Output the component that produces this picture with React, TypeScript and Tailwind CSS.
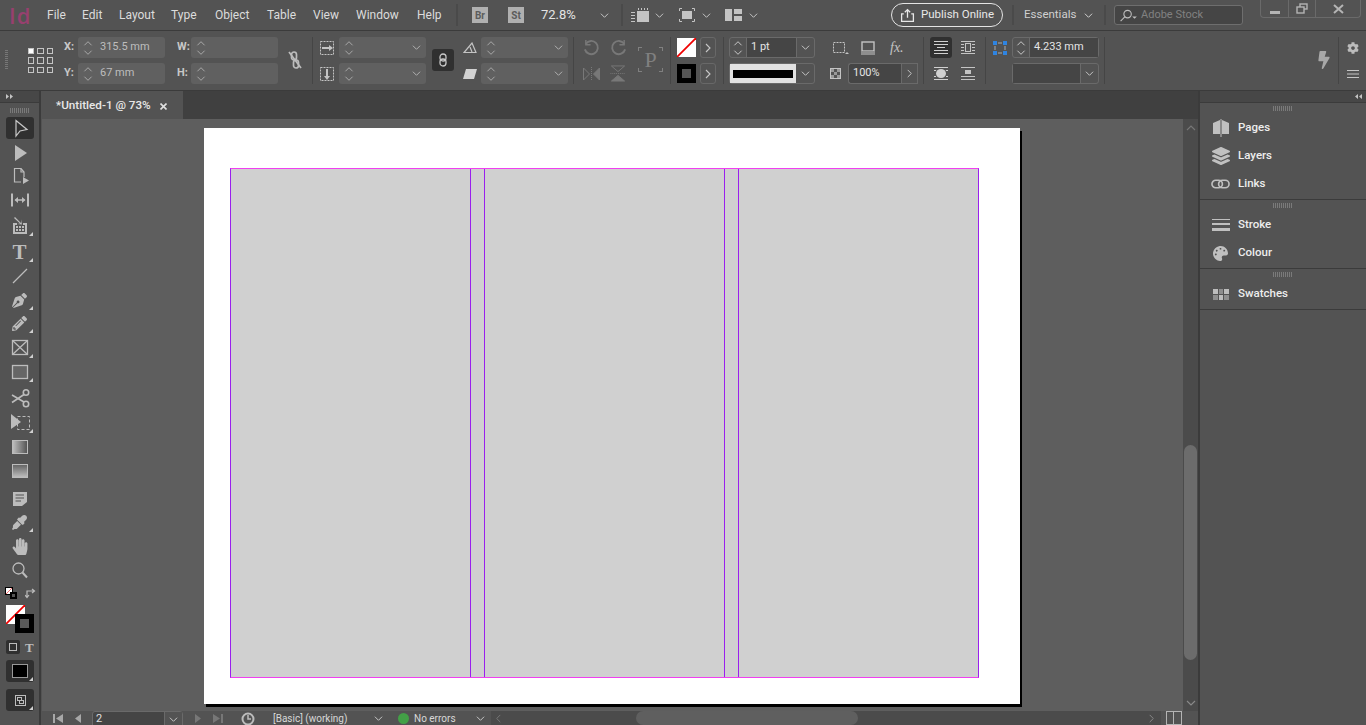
import type { FC, ReactNode } from "react";
import { FaBolt, FaCog, FaEyeDropper, FaHandPaper, FaLayerGroup, FaPalette, FaPencilAlt, FaPenNib } from "react-icons/fa";

const Chev: FC<{ dir?: "up" | "down" | "left" | "right"; className?: string }> = ({ dir = "down", className = "w-[9px] h-[9px] text-[#c4c4c4]" }) => {
  const pts = { up: "1,7 5,3 9,7", down: "1,3 5,7 9,3", left: "7,1 3,5 7,9", right: "3,1 7,5 3,9" }[dir];
  return (
    <svg viewBox="0 0 10 10" className={`shrink-0 ${className}`} fill="none" stroke="currentColor" strokeWidth="1.1">
      <polyline points={pts} />
    </svg>
  );
};

const Divider: FC<{ className: string }> = ({ className }) => <div className={`w-px shrink-0 bg-[#454545] ${className}`} />;

const Stepper: FC<{ value?: string; dropdown?: boolean }> = ({ value, dropdown }) => (
  <div className="flex h-[21px] w-[87px] items-center rounded-[3px] bg-[#606060]">
    <div className="ml-[4px] flex w-[12px] flex-col items-center text-[#a8a8a8]">
      <Chev dir="up" className="h-[9px] w-[10px]" />
      <Chev dir="down" className="h-[9px] w-[10px]" />
    </div>
    <span className="ml-[6px] text-[11px] text-[#bdbdbd]">{value}</span>
    {dropdown && <Chev className="ml-auto mr-[5px] h-[9px] w-[9px] text-[#b0b0b0]" />}
  </div>
);

const TwoRows: FC<{ className: string; children: ReactNode }> = ({ className, children }) => (
  <div className={`flex shrink-0 flex-col gap-[5px] ${className}`}>{children}</div>
);

const Row: FC<{ children?: ReactNode; className?: string }> = ({ children, className = "" }) => (
  <div className={`flex h-[21px] items-center ${className}`}>{children}</div>
);

const NoneSwatch: FC<{ className: string }> = ({ className }) => (
  <svg viewBox="0 0 19 19" className={className}>
    <rect width="19" height="19" fill="#fff" />
    <line x1="0" y1="19" x2="19" y2="0" stroke="#f00000" strokeWidth="1.8" />
  </svg>
);

const Corner: FC = () => (
  <span className="absolute bottom-[1px] right-[1px] h-0 w-0 border-b-[4px] border-l-[4px] border-b-[#cfcfcf] border-l-transparent" />
);

const MENU = [
  { label: "File", w: "w-[35px]" },
  { label: "Edit", w: "w-[37px]" },
  { label: "Layout", w: "w-[52px]" },
  { label: "Type", w: "w-[44px]" },
  { label: "Object", w: "w-[52px]" },
  { label: "Table", w: "w-[46px]" },
  { label: "View", w: "w-[43px]" },
  { label: "Window", w: "w-[61px]" },
  { label: "Help", w: "w-[39px]" },
];

const MenuBar: FC = () => (
  <div className="flex h-[30px] items-center text-[12px] text-[#dcdcdc]">
    <span className="w-[47px] shrink-0 pl-[9px] text-[22px] font-semibold leading-none tracking-[1px] text-[#97406f] [font-family:'Open_Sans',sans-serif]">Id</span>
    {MENU.map((m) => (
      <span key={m.label} className={`shrink-0 ${m.w}`}>{m.label}</span>
    ))}
    <div className="h-[22px] w-[2px] shrink-0 bg-[#4a4a4a]" />
    <span className="ml-[14px] flex h-[16px] w-[16px] shrink-0 items-center justify-center bg-[#b0b0b0] text-[10px] font-bold text-[#5c5c5c]">Br</span>
    <span className="ml-[20px] flex h-[16px] w-[16px] shrink-0 items-center justify-center bg-[#b0b0b0] text-[10px] font-bold text-[#5c5c5c]">St</span>
    <span className="ml-[17px] w-[59px] shrink-0 text-[13px] text-[#e4e4e4]">72.8%</span>
    <Chev />
    <div className="ml-[12px] h-[22px] w-[2px] shrink-0 bg-[#4a4a4a]" />
    <svg viewBox="0 0 18 16" className="ml-[8px] h-[16px] w-[18px] shrink-0" fill="#c4c4c4">
      <rect x="6" y="4" width="12" height="11" />
      <path d="M0 5h4v1H0zM0 8h4v1H0zM0 11h4v1H0zM0 14h4v1H0zM7 1h1v2H7zM10 1h1v2h-1zM13 1h1v2h-1zM16 1h1v2h-1z" />
    </svg>
    <Chev className="ml-[6px] h-[9px] w-[9px] text-[#c4c4c4]" />
    <svg viewBox="0 0 16 14" className="ml-[15px] h-[14px] w-[16px] shrink-0" fill="none" stroke="#c4c4c4">
      <rect x="3" y="3" width="10" height="8" fill="#c4c4c4" stroke="none" />
      <path d="M0.5 3V0.5H3M13 0.5H15.5V3M15.5 11V13.5H13M3 13.5H0.5V11" />
    </svg>
    <Chev className="ml-[7px] h-[9px] w-[9px] text-[#c4c4c4]" />
    <svg viewBox="0 0 17 12" className="ml-[14px] h-[12px] w-[17px] shrink-0" fill="#c4c4c4">
      <rect width="7" height="12" />
      <rect x="9" width="8" height="5" />
      <rect x="9" y="7" width="8" height="5" />
    </svg>
    <Chev className="ml-[7px] h-[9px] w-[9px] text-[#c4c4c4]" />
    <button className="ml-[133px] flex h-[24px] w-[112px] shrink-0 items-center rounded-full border border-[#e4e4e4] text-[11.5px] text-[#e8e8e8]">
      <svg viewBox="0 0 14 14" className="ml-[8px] h-[15px] w-[15px]" fill="none" stroke="#e8e8e8" strokeWidth="1.200">
        <path d="M3.500 5.500H1.500V12.500H12.500V5.500H10.500M7 9V1.500M4.500 4L7 1.500L9.500 4" />
      </svg>
      <span className="ml-[6px]">Publish Online</span>
    </button>
    <div className="ml-[9px] h-[20px] w-[2px] shrink-0 bg-[#4a4a4a]" />
    <span className="ml-[10px] w-[50px] shrink-0 text-[11.5px] text-[#d0d0d0]">Essentials</span>
    <Chev className="ml-[10px] h-[9px] w-[9px] text-[#d0d0d0]" />
    <div className="ml-[11px] h-[20px] w-[2px] shrink-0 bg-[#4a4a4a]" />
    <div className="ml-[8px] flex h-[20px] w-[129px] shrink-0 items-center rounded-[3px] border border-[#6e6e6e] bg-[#454545]">
      <svg viewBox="0 0 20 14" className="ml-[4px] h-[13px] w-[19px]" fill="none" stroke="#bdbdbd" strokeWidth="1.2">
        <circle cx="9" cy="5.5" r="4" />
        <path d="M6 8.5L1.5 13" />
        <path d="M14 8h5l-2.500 2.500z" fill="#bdbdbd" stroke="none" />
      </svg>
      <span className="ml-[3px] text-[11px] text-[#818181]">Adobe Stock</span>
    </div>
    <div className="ml-[17px] mb-[12px] flex h-[18px] w-[101px] shrink-0 rounded-b-[4px] border border-t-0 border-[#6a6a6a]">
      <div className="flex w-[28px] items-end justify-center border-r border-[#6a6a6a] pb-[3px]">
        <div className="h-[3px] w-[10px] bg-[#b4b4b4]" />
      </div>
      <div className="flex w-[27px] items-center justify-center border-r border-[#6a6a6a]">
        <svg viewBox="0 0 12 11" className="h-[11px] w-[12px]" fill="none" stroke="#b4b4b4" strokeWidth="1.4">
          <rect x="4" y="1" width="7" height="5" />
          <rect x="1" y="4" width="7" height="6" fill="#535353" />
        </svg>
      </div>
      <div className="flex flex-1 items-center justify-center">
        <svg viewBox="0 0 11 10" className="h-[10px] w-[11px]" stroke="#b4b4b4" strokeWidth="2">
          <path d="M1 1L10 9M10 1L1 9" />
        </svg>
      </div>
    </div>
  </div>
);

const RefPoints: FC = () => (
  <div className="ml-[20px] mt-[11px] grid h-[25px] w-[25px] shrink-0 grid-cols-3 grid-rows-3 gap-[3px]">
    {Array.from({ length: 9 }).map((_, i) => (
      <div key={i} className={`border border-[#c4c4c4] ${i === 0 ? "bg-white" : ""}`} />
    ))}
  </div>
);

const ControlBar: FC = () => (
  <div className="flex h-[60px] border-t border-[#3b3b3b] pt-[6px] text-[#c8c8c8]">
    <div className="ml-[5px] mt-[13px] h-[20px] w-[3px] shrink-0 bg-[repeating-linear-gradient(#777_0_1px,transparent_1px_2px)]" />
    <RefPoints />
    <TwoRows className="ml-[11px] w-[14px] text-[11px] font-bold">
      <Row>X:</Row>
      <Row>Y:</Row>
    </TwoRows>
    <TwoRows className="w-[87px]">
      <Stepper value="315.5 mm" />
      <Stepper value="67 mm" />
    </TwoRows>
    <TwoRows className="ml-[12px] w-[14px] text-[11px] font-bold">
      <Row>W:</Row>
      <Row>H:</Row>
    </TwoRows>
    <TwoRows className="w-[87px]">
      <Stepper />
      <Stepper />
    </TwoRows>
    <svg viewBox="0 0 16 18" className="ml-[9px] mt-[14px] h-[18px] w-[16px] shrink-0" fill="none" stroke="#bcbcbc" strokeWidth="1.7">
      <rect x="4.500" y="1" width="5" height="8" rx="2.500" />
      <rect x="6.500" y="9" width="5" height="8" rx="2.500" />
      <path d="M2 1L14 17" />
    </svg>
    <Divider className="ml-[9px] h-[47px]" />
    <TwoRows className="ml-[7px] w-[14px]">
      <Row>
        <svg viewBox="0 0 14 14" className="h-[14px] w-[14px]" fill="none" stroke="#c4c4c4">
          <rect x="0.500" y="0.500" width="13" height="13" strokeDasharray="2 1" />
          <path d="M2 7H9" strokeWidth="2" />
          <path d="M9 4L13 7L9 10z" fill="#c4c4c4" stroke="none" />
        </svg>
      </Row>
      <Row>
        <svg viewBox="0 0 14 14" className="h-[14px] w-[14px]" fill="none" stroke="#c4c4c4">
          <rect x="0.500" y="0.500" width="13" height="13" strokeDasharray="2 1" />
          <path d="M7 2V9" strokeWidth="2" />
          <path d="M4 9L7 13L10 9z" fill="#c4c4c4" stroke="none" />
        </svg>
      </Row>
    </TwoRows>
    <TwoRows className="ml-[5px] w-[87px]">
      <Stepper dropdown />
      <Stepper dropdown />
    </TwoRows>
    <div className="ml-[6px] mt-[12px] flex h-[22px] w-[22px] shrink-0 items-center justify-center rounded-[3px] bg-[#303030]">
      <svg viewBox="0 0 8 14" className="h-[14px] w-[8px]" fill="none" stroke="#c8c8c8" strokeWidth="1.300">
        <rect x="1" y="1" width="6" height="7" rx="3" />
        <rect x="1" y="6" width="6" height="7" rx="3" />
      </svg>
    </div>
    <TwoRows className="ml-[9px] w-[14px]">
      <Row>
        <svg viewBox="0 0 14 11" className="h-[11px] w-[14px]" fill="none" stroke="#c4c4c4" strokeWidth="1.200">
          <path d="M1 10.500H13L9 1z" />
          <path d="M7 5L9 10" />
        </svg>
      </Row>
      <Row>
        <svg viewBox="0 0 14 10" className="h-[10px] w-[14px]" fill="#d2d2d2">
          <path d="M3 0H14L11 10H0z" />
        </svg>
      </Row>
    </TwoRows>
    <TwoRows className="ml-[4px] w-[87px]">
      <Stepper dropdown />
      <Stepper dropdown />
    </TwoRows>
    <Divider className="ml-[5px] h-[47px]" />
    <TwoRows className="ml-[9px] w-[17px] text-[#787878]">
      <Row>
        <svg viewBox="0 0 18 18" className="h-[17px] w-[17px]" fill="none" stroke="#787878" strokeWidth="2">
          <path d="M3 5A7 7 0 1 1 2 11" />
          <path d="M3 1V6H8" strokeWidth="1.500" />
        </svg>
      </Row>
      <Row>
        <svg viewBox="0 0 17 14" className="h-[14px] w-[17px]" fill="none" stroke="#787878">
          <path d="M0.500 1L6.500 7L0.500 13z" />
          <path d="M16.500 1L10.500 7L16.500 13z" fill="#787878" />
          <path d="M8.500 0V14" strokeDasharray="1 1" />
        </svg>
      </Row>
    </TwoRows>
    <TwoRows className="ml-[10px] w-[17px]">
      <Row>
        <svg viewBox="0 0 18 18" className="h-[17px] w-[17px]" fill="none" stroke="#787878" strokeWidth="2">
          <path d="M15 5A7 7 0 1 0 16 11" />
          <path d="M15 1V6H10" strokeWidth="1.500" />
        </svg>
      </Row>
      <Row>
        <svg viewBox="0 0 16 18" className="h-[17px] w-[16px]" fill="none" stroke="#787878">
          <path d="M1 1L8 7L15 1z" />
          <path d="M1 17L8 11L15 17z" fill="#787878" />
          <path d="M0 9H16" strokeDasharray="1 1" />
        </svg>
      </Row>
    </TwoRows>
    <div className="relative ml-[11px] mt-[10px] flex h-[25px] w-[25px] shrink-0 items-center justify-center border-0 text-[22px] leading-none text-[#808080] [font-family:'Liberation_Serif',serif]">
      P
      <span className="absolute left-0 top-0 h-[4px] w-[4px] border-l border-t border-[#808080]" />
      <span className="absolute right-0 top-0 h-[4px] w-[4px] border-r border-t border-[#808080]" />
      <span className="absolute bottom-0 left-0 h-[4px] w-[4px] border-b border-l border-[#808080]" />
      <span className="absolute bottom-0 right-0 h-[4px] w-[4px] border-b border-r border-[#808080]" />
    </div>
    <Divider className="ml-[7px] h-[47px]" />
    <TwoRows className="ml-[6px] w-[19px]">
      <Row><NoneSwatch className="h-[19px] w-[19px]" /></Row>
      <Row>
        <div className="flex h-[19px] w-[19px] items-center justify-center bg-black">
          <div className="h-[9px] w-[9px] bg-[#555]" />
        </div>
      </Row>
    </TwoRows>
    <TwoRows className="ml-[4px] w-[16px]">
      <Row className="justify-center rounded-[3px] border border-[#686868]"><Chev dir="right" className="h-[10px] w-[10px] text-[#c8c8c8]" /></Row>
      <Row className="justify-center rounded-[3px] border border-[#686868]"><Chev dir="right" className="h-[10px] w-[10px] text-[#c8c8c8]" /></Row>
    </TwoRows>
    <Divider className="ml-[7px] h-[47px]" />
    <TwoRows className="ml-[5px] w-[86px]">
      <Row className="rounded-[3px] border border-[#6a6a6a]">
        <div className="flex h-full w-[17px] flex-col items-center justify-center border-r border-[#6a6a6a] text-[#c8c8c8]">
          <Chev dir="up" className="h-[9px] w-[10px]" />
          <Chev dir="down" className="h-[9px] w-[10px]" />
        </div>
        <div className="flex h-full flex-1 items-center bg-[#454545] pl-[4px] text-[11px] text-[#e4e4e4]">1 pt</div>
        <div className="flex h-full w-[18px] items-center justify-center border-l border-[#6a6a6a]"><Chev /></div>
      </Row>
      <Row className="rounded-[3px] border border-[#6a6a6a]">
        <div className="flex h-full flex-1 items-center justify-center bg-[#e2e2e2]">
          <div className="h-[8px] w-[60px] bg-black" />
        </div>
        <div className="flex h-full w-[18px] items-center justify-center"><Chev /></div>
      </Row>
    </TwoRows>
    <TwoRows className="ml-[15px] w-[88px]">
      <Row>
        <svg viewBox="0 0 17 14" className="ml-[2px] h-[14px] w-[17px]" fill="none" stroke="#c4c4c4">
          <rect x="1.500" y="1.500" width="11" height="10" strokeDasharray="2 1" />
          <path d="M13 13h4l-2 -2z" fill="#c4c4c4" stroke="none" />
        </svg>
        <svg viewBox="0 0 14 14" className="ml-[12px] h-[14px] w-[14px]" fill="none" stroke="#c4c4c4" strokeWidth="1.400">
          <rect x="1" y="1" width="12" height="9" />
          <rect x="0" y="10" width="14" height="4" fill="#8e8e8e" stroke="none" />
        </svg>
        <span className="ml-[15px] text-[14px] italic text-[#c4c4c4] [font-family:'Liberation_Serif',serif]">fx.</span>
      </Row>
      <Row>
        <div className="grid h-[11px] w-[11px] shrink-0 grid-cols-3 grid-rows-3 border border-[#c4c4c4]">
          <i className="bg-[#999]" /><i /><i className="bg-[#999]" /><i /><i className="bg-[#999]" /><i /><i className="bg-[#999]" /><i /><i className="bg-[#999]" />
        </div>
        <div className="ml-[7px] flex h-full w-[70px] items-center rounded-l-[3px] border border-r-0 border-[#6a6a6a] bg-[#454545] pl-[4px] text-[11px] text-[#e4e4e4]">
          100%
          <span className="ml-auto flex h-full w-[17px] items-center justify-center border-x border-[#6a6a6a] bg-[#535353]"><Chev dir="right" /></span>
        </div>
      </Row>
    </TwoRows>
    <Divider className="ml-[5px] h-[47px]" />
    <TwoRows className="ml-[6px] w-[22px]">
      <Row className="justify-center rounded-[3px] bg-[#303030]">
        <svg viewBox="0 0 14 13" className="h-[13px] w-[14px]" stroke="#d0d0d0">
          <path d="M0 .5h14M0 3.500h14M3 6.500h8M0 9.500h14M0 12.500h14" />
        </svg>
      </Row>
      <Row className="justify-center">
        <svg viewBox="0 0 14 13" className="h-[13px] w-[14px]" stroke="#d0d0d0">
          <path d="M0 .5h14M0 12.500h14" />
          <ellipse cx="7" cy="6.500" rx="5" ry="4.500" fill="#d0d0d0" stroke="none" />
          <path d="M0 3.500h2M12 3.500h2M0 9.500h2M12 9.500h2" />
        </svg>
      </Row>
    </TwoRows>
    <TwoRows className="ml-[7px] w-[18px]">
      <Row className="justify-center">
        <svg viewBox="0 0 14 13" className="h-[13px] w-[14px]" stroke="#c4c4c4" fill="none">
          <path d="M0 .5h14M0 12.500h14M0 3.500h3M0 6.500h3M0 9.500h3M11 3.500h3M11 6.500h3M11 9.500h3" />
          <rect x="4.500" y="2.500" width="5" height="8" />
        </svg>
      </Row>
      <Row className="justify-center">
        <svg viewBox="0 0 14 13" className="h-[13px] w-[14px]" stroke="#c4c4c4">
          <path d="M0 .5h14M0 9.500h14M0 12.500h14" />
          <rect x="4" y="3" width="6" height="4" fill="#c4c4c4" stroke="none" />
        </svg>
      </Row>
    </TwoRows>
    <Divider className="ml-[8px] h-[47px]" />
    <svg viewBox="0 0 14 14" className="ml-[7px] mt-[4px] h-[14px] w-[14px] shrink-0" fill="none">
      <path d="M5 2H9M5 12H9M2 5V9M12 5V9" stroke="#8e8e8e" strokeWidth="1.500" />
      <path d="M0 0h4v4H0zM10 0h4v4h-4zM0 10h4v4H0zM10 10h4v4h-4z" fill="#2f84e0" />
    </svg>
    <TwoRows className="ml-[5px] w-[87px]">
      <Row className="rounded-[3px] border border-[#6a6a6a]">
        <div className="flex h-full w-[17px] flex-col items-center justify-center border-r border-[#6a6a6a] text-[#c8c8c8]">
          <Chev dir="up" className="h-[9px] w-[10px]" />
          <Chev dir="down" className="h-[9px] w-[10px]" />
        </div>
        <div className="flex h-full flex-1 items-center bg-[#454545] pl-[4px] text-[11px] text-[#e4e4e4]">4.233 mm</div>
      </Row>
      <Row className="rounded-[3px] border border-[#6a6a6a]">
        <div className="h-full flex-1 bg-[#454545]" />
        <div className="flex h-full w-[18px] items-center justify-center border-l border-[#6a6a6a]"><Chev /></div>
      </Row>
    </TwoRows>
    <Divider className="ml-[5px] h-[47px]" />
    <FaBolt className="ml-[212px] mt-[14px] h-[18px] w-[14px] shrink-0 text-[#a8a8a8]" />
    <Divider className="ml-[7px] h-[47px]" />
    <TwoRows className="ml-[6px] w-[16px]">
      <Row className="justify-center"><FaCog className="h-[12px] w-[12px] text-[#bcbcbc]" /></Row>
      <Row className="justify-center">
        <svg viewBox="0 0 12 8" className="h-[8px] w-[12px]" stroke="#c4c4c4"><path d="M0 .5h12M0 4h12M0 7.500h12" /></svg>
      </Row>
    </TwoRows>
  </div>
);

const Grip: FC = () => (
  <div className="h-[5px] w-[20px] bg-[repeating-linear-gradient(90deg,#7a7a7a_0_1px,transparent_1px_2px)]" />
);

const ico = "h-[22px] w-[28px]";
const TOOLS: { gap: string; corner?: boolean; active?: boolean; node: ReactNode }[] = [
  {
    gap: "",
    active: true,
    node: (
      <svg viewBox="0 0 28 22" className={ico} fill="none" stroke="#c8c8c8" strokeWidth="1.200">
        <path d="M10 3.500L21 12.500L14 14L10 19z" />
      </svg>
    ),
  },
  {
    gap: "mt-[3px]",
    node: (
      <svg viewBox="0 0 28 22" className={ico} fill="#bcbcbc">
        <path d="M9 3L21 11L9 19z" />
      </svg>
    ),
  },
  {
    gap: "mt-[1px]",
    node: (
      <svg viewBox="0 0 28 22" className={ico} fill="none" stroke="#bcbcbc" strokeWidth="1.200">
        <path d="M15 17H8.500V3.500H15L18 7V12" />
        <path d="M15 3.500V7H18" />
        <path d="M17 12L23 15.500L17 19z" fill="#bcbcbc" stroke="none" />
      </svg>
    ),
  },
  {
    gap: "mt-[2px]",
    node: (
      <svg viewBox="0 0 28 22" className={ico} stroke="#bcbcbc" fill="none">
        <path d="M6 4.500V17.500M22 4.500V17.500" strokeWidth="2" />
        <path d="M9.500 11H18.500" strokeWidth="1.500" />
        <path d="M12 8L8.500 11L12 14zM16 8L19.500 11L16 14z" fill="#bcbcbc" stroke="none" />
      </svg>
    ),
  },
  {
    gap: "mt-[4px]",
    corner: true,
    node: (
      <svg viewBox="0 0 28 22" className={ico} fill="#bcbcbc">
        <path d="M7 8H11V10H9V17H19V10H17V8H21V19H7z" />
        <path d="M9 2L15 8V4.500L16 9.500L11 9L14 8.500L8 3z" />
        <path d="M10 11h2v2h-2zM13 11h2v2h-2zM16 11h2v2h-2zM10 14h2v2h-2zM13 14h2v2h-2zM16 14h2v2h-2z" />
      </svg>
    ),
  },
  {
    gap: "mt-[4px]",
    corner: true,
    node: <span className="flex h-[22px] w-[28px] items-center justify-center text-[21px] font-bold leading-none text-[#bcbcbc] [font-family:'Liberation_Serif',serif]">T</span>,
  },
  {
    gap: "mt-[2px]",
    node: (
      <svg viewBox="0 0 28 22" className={ico} stroke="#bcbcbc" strokeWidth="1.300">
        <path d="M7 18L21 4" />
      </svg>
    ),
  },
  { gap: "mt-[2px]", corner: true, node: <span className={`${ico} flex items-center justify-center`}><FaPenNib className="h-[15px] w-[15px] text-[#bcbcbc]" /></span> },
  { gap: "mt-[1px]", corner: true, node: <span className={`${ico} flex items-center justify-center`}><FaPencilAlt className="h-[15px] w-[15px] text-[#bcbcbc]" /></span> },
  {
    gap: "mt-[3px]",
    corner: true,
    node: (
      <svg viewBox="0 0 28 22" className={ico} fill="none" stroke="#bcbcbc" strokeWidth="1.300">
        <rect x="6.500" y="3.500" width="15" height="14" />
        <path d="M6.500 3.500L21.500 17.500M21.500 3.500L6.500 17.500" />
      </svg>
    ),
  },
  {
    gap: "mt-[2px]",
    corner: true,
    node: (
      <svg viewBox="0 0 28 22" className={ico} fill="#666666" stroke="#bcbcbc" strokeWidth="1.300">
        <rect x="6.500" y="4.500" width="15" height="13" />
      </svg>
    ),
  },
  {
    gap: "mt-[5px]",
    node: (
      <svg viewBox="0 0 28 22" className={ico} fill="none" stroke="#bcbcbc" strokeWidth="1.600">
        <circle cx="20" cy="4.500" r="2.700" />
        <circle cx="20" cy="16" r="2.700" />
        <path d="M18 6.500L6 14.500M18 14L6 7" />
      </svg>
    ),
  },
  {
    gap: "mt-[2px]",
    corner: true,
    node: (
      <svg viewBox="0 0 28 22" className={ico} fill="none">
        <rect x="11.500" y="4.500" width="12" height="13" stroke="#bcbcbc" strokeDasharray="3 2" />
        <path d="M5 2L15 10L5 17z" fill="#bcbcbc" />
      </svg>
    ),
  },
  {
    gap: "mt-[2px]",
    node: <div className="mx-[6px] my-[4px] h-[14px] w-[16px] border border-[#bcbcbc] bg-[linear-gradient(90deg,#bcbcbc,#555)]" />,
  },
  {
    gap: "mt-[2px]",
    node: <div className="mx-[6px] my-[4px] h-[14px] w-[16px] border border-[#bcbcbc] bg-[linear-gradient(#666,#bcbcbc)]" />,
  },
  {
    gap: "mt-[6px]",
    node: (
      <svg viewBox="0 0 28 22" className={ico} fill="#bcbcbc">
        <path d="M7 4H21V14L16 18H7z" />
        <path d="M9.500 7H18M9.500 10H18M9.500 13H15" stroke="#535353" strokeWidth="1.200" />
      </svg>
    ),
  },
  { gap: "mt-[1px]", corner: true, node: <span className={`${ico} flex items-center justify-center`}><FaEyeDropper className="h-[15px] w-[15px] text-[#bcbcbc]" /></span> },
  { gap: "mt-[2px]", node: <span className={`${ico} flex items-center justify-center`}><FaHandPaper className="h-[17px] w-[16px] text-[#bcbcbc]" /></span> },
  {
    gap: "mt-[2px]",
    node: (
      <svg viewBox="0 0 28 22" className={ico} fill="none" stroke="#bcbcbc">
        <circle cx="12.500" cy="9.500" r="5.500" strokeWidth="1.300" />
        <path d="M16.500 13.500L21 18.500" strokeWidth="2" />
      </svg>
    ),
  },
];

const ToolPanel: FC = () => (
  <div className="flex w-[41px] shrink-0 flex-col border-r-2 border-[#3b3b3b]">
    <div className="flex h-[12px] items-center border-b border-[#3b3b3b] bg-[#474747] pl-[6px] text-[8px] leading-none text-[#c4c4c4]">
      <svg viewBox="0 0 7 5" className="h-[5px] w-[7px]" fill="#c4c4c4"><path d="M0 0L3 2.500L0 5zM4 0L7 2.500L4 5z" /></svg>
    </div>
    <div className="flex h-[14px] items-center justify-center"><Grip /></div>
    <div className="flex flex-col items-center">
      {TOOLS.map((t, i) => (
        <div key={i} className={`relative flex h-[22px] w-[28px] rounded-[3px] ${t.gap} ${t.active ? "bg-[#303030]" : ""}`}>
          {t.node}
          {t.corner && <Corner />}
        </div>
      ))}
    </div>
    <div className="mt-[6px] flex items-center pl-[5px]">
      <div className="relative h-[12px] w-[12px]">
        <div className="absolute left-0 top-0 h-[8px] w-[8px] border border-black">
          <NoneSwatch className="h-full w-full" />
        </div>
        <div className="absolute bottom-0 right-0 h-[7px] w-[7px] border-2 border-black bg-[#555]" />
      </div>
      <svg viewBox="0 0 11 11" className="ml-[8px] h-[11px] w-[11px]" fill="none" stroke="#bcbcbc" strokeWidth="1.200">
        <path d="M2 9V3H9M7 1L9.500 3L7 5M0 7L2 9.500L4 7" />
      </svg>
    </div>
    <div className="relative ml-[6px] mt-[6px] h-[28px] w-[28px]">
      <NoneSwatch className="absolute left-0 top-0 h-[19px] w-[19px]" />
      <div className="absolute left-[9px] top-[9px] flex h-[19px] w-[19px] items-center justify-center bg-black">
        <div className="h-[9px] w-[9px] bg-[#5a5a5a]" />
      </div>
    </div>
    <div className="ml-[6px] mt-[7px] flex items-center">
      <div className="flex h-[14px] w-[14px] items-center justify-center rounded-[2px] bg-[#303030]">
        <div className="h-[8px] w-[8px] border border-[#bcbcbc]" />
      </div>
      <span className="ml-[5px] text-[13px] font-bold leading-none text-[#bcbcbc] [font-family:'Liberation_Serif',serif]">T</span>
    </div>
    <div className="relative ml-[6px] mt-[6px] flex h-[22px] w-[28px] items-center justify-center rounded-[3px] bg-[#303030]">
      <div className="h-[14px] w-[16px] border border-[#999] bg-black" />
      <Corner />
    </div>
    <div className="relative ml-[6px] mt-[7px] flex h-[22px] w-[28px] items-center justify-center rounded-[3px] bg-[#303030]">
      <svg viewBox="0 0 11 11" className="h-[11px] w-[11px]" fill="none" stroke="#bcbcbc"><rect x=".5" y=".5" width="10" height="10" /><rect x="2.500" y="2.500" width="4" height="3" /><rect x="4.500" y="5.500" width="4" height="3" /></svg>
      <Corner />
    </div>
  </div>
);

const Spread: FC = () => (
  <div className="ml-[162px] mt-[9px] h-[576px] w-[816px] shrink-0 bg-white pl-[26px] pt-[40px] shadow-[2px_3px_0_#000]">
    <div className="flex h-[510px] w-[749px] border-x border-y border-x-[#9a20ee] border-y-[#f03ff0] bg-[#d0d0d0]">
      <div className="flex-1" />
      <div className="w-[15px] border-x border-[#9a20ee]" />
      <div className="flex-1" />
      <div className="w-[15px] border-x border-[#9a20ee]" />
      <div className="flex-1" />
    </div>
  </div>
);

const StatusBar: FC = () => (
  <div className="flex h-[14px] items-center overflow-hidden bg-[#535353] text-[10px] text-[#d4d4d4]">
    <svg viewBox="0 0 10 9" className="ml-[11px] h-[9px] w-[10px] shrink-0" fill="#a8a8a8"><path d="M0 0h2v9H0zM10 0v9L3 4.500z" /></svg>
    <svg viewBox="0 0 6 9" className="ml-[12px] h-[9px] w-[6px] shrink-0" fill="#a8a8a8"><path d="M6 0v9L0 4.500z" /></svg>
    <div className="ml-[11px] flex h-[16px] w-[91px] shrink-0 items-center self-start rounded-t-[3px] border border-[#6a6a6a] bg-[#454545] pl-[3px] text-[11px] text-[#e0e0e0]">
      2
      <span className="ml-auto flex h-full w-[18px] items-center justify-center border-l border-[#6a6a6a] bg-[#535353]"><Chev /></span>
    </div>
    <svg viewBox="0 0 6 9" className="ml-[12px] h-[9px] w-[6px] shrink-0" fill="#777"><path d="M0 0v9L6 4.500z" /></svg>
    <svg viewBox="0 0 10 9" className="ml-[12px] h-[9px] w-[10px] shrink-0" fill="#777"><path d="M0 0v9L7 4.500zM8 0h2v9H8z" /></svg>
    <svg viewBox="0 0 14 14" className="ml-[18px] h-[14px] w-[14px] shrink-0" fill="none" stroke="#bcbcbc" strokeWidth="2">
      <circle cx="7" cy="8" r="5.500" />
      <path d="M7 4V8H10" strokeWidth="1.500" />
    </svg>
    <span className="ml-[18px] w-[101px] shrink-0 text-[#d8d8d8]">[Basic] (working)</span>
    <Chev className="h-[9px] w-[9px] text-[#c4c4c4]" />
    <span className="ml-[15px] h-[11px] w-[11px] shrink-0 rounded-full bg-[#43a047]" />
    <span className="ml-[5px] w-[62px] shrink-0 text-[#d8d8d8]">No errors</span>
    <Chev className="h-[9px] w-[9px] text-[#c4c4c4]" />
    <div className="ml-[6px] flex h-full flex-1 items-center bg-[#4b4b4b]">
      <Chev dir="left" className="ml-[3px] h-[9px] w-[9px] text-[#777]" />
      <div className="ml-[133px] h-full w-[222px] rounded-full bg-[#5f5f5f]" />
      <Chev dir="right" className="ml-auto mr-[5px] h-[9px] w-[9px] text-[#888]" />
    </div>
    <div className="flex h-full w-[37px] shrink-0 items-center pl-[5px]">
      <div className="flex h-[14px] w-[16px] border border-[#b4b4b4]"><div className="h-full w-1/2 border-r border-[#b4b4b4]" /></div>
    </div>
  </div>
);

const PANELS = [
  {
    items: [
      {
        label: "Pages",
        icon: (
          <svg viewBox="0 0 18 18" className="h-[18px] w-[18px]" fill="#c0c0c0">
            <path d="M1 4L8 1V15H1zM10 1L17 4V15H10z" />
            <path d="M9 0V18" stroke="#c0c0c0" />
          </svg>
        ),
      },
      { label: "Layers", icon: <FaLayerGroup className="h-[18px] w-[18px] text-[#c0c0c0]" /> },
      {
        label: "Links",
        icon: (
          <svg viewBox="0 0 20 10" className="h-[10px] w-[20px]" fill="none" stroke="#c0c0c0" strokeWidth="1.700">
            <rect x="1" y="1" width="11" height="8" rx="4" />
            <rect x="8" y="1" width="11" height="8" rx="4" />
          </svg>
        ),
      },
    ],
    cls: "h-[97px]",
  },
  {
    items: [
      {
        label: "Stroke",
        icon: (
          <svg viewBox="0 0 18 12" className="h-[12px] w-[18px]" fill="#c0c0c0">
            <path d="M0 0h18v1H0zM0 4h18v2H0zM0 9h18v3H0z" />
          </svg>
        ),
      },
      { label: "Colour", icon: <FaPalette className="h-[15px] w-[19px] text-[#c0c0c0]" /> },
    ],
    cls: "h-[69px]",
  },
  {
    items: [
      {
        label: "Swatches",
        icon: (
          <svg viewBox="0 0 16 11" className="h-[11px] w-[16px]" fill="#bdbdbd">
            <rect width="16" height="11" fill="#8e8e8e" />
            <path d="M0 0h5v5H0zM11 0h5v5h-5zM5.500 5.500h5V11h-5z" />
            <path d="M5 0h1v11H5zM10 0h1v11h-1zM0 5h16v1H0z" fill="#535353" />
          </svg>
        ),
      },
    ],
    cls: "h-[41px]",
  },
];

const RightPanel: FC = () => (
  <div className="flex w-[166px] shrink-0 flex-col bg-[#535353]">
    <div className="flex h-[12px] items-center justify-end border-b border-[#3b3b3b] bg-[#474747] pr-[4px]">
      <svg viewBox="0 0 7 5" className="h-[5px] w-[7px]" fill="#c4c4c4"><path d="M7 0L4 2.500L7 5zM3 0L0 2.500L3 5z" /></svg>
    </div>
    {PANELS.map((p, i) => (
      <div key={i} className={`flex flex-col border-b border-[#3b3b3b] ${p.cls}`}>
        <div className="mt-[3px] flex justify-center"><Grip /></div>
        <div className="mt-[3px]">
          {p.items.map((it) => (
            <div key={it.label} className="flex h-[28px] items-center">
              <span className="ml-[11px] flex w-[19px] justify-center">{it.icon}</span>
              <span className="ml-[8px] text-[11.5px] font-medium text-[#ededed]">{it.label}</span>
            </div>
          ))}
        </div>
      </div>
    ))}
  </div>
);

const App: FC = () => (
  <div className="flex h-[725px] w-[1366px] flex-col overflow-hidden bg-[#535353] [font-family:Roboto,sans-serif]">
    <MenuBar />
    <ControlBar />
    <div className="flex min-h-0 flex-1 border-t border-[#3b3b3b]">
      <ToolPanel />
      <div className="ml-px flex min-w-0 flex-1 flex-col border-r-2 border-[#3b3b3b]">
        <div className="flex h-[28px] shrink-0 bg-[#404040]">
          <div className="flex w-[141px] items-center bg-[#535353] pl-[14px] pt-[2px] text-[11.7px] font-medium text-[#e8e8e8]">
            *Untitled-1 @ 73%
            <svg viewBox="0 0 7 7" className="ml-[9px] h-[7px] w-[7px]" stroke="#e0e0e0" strokeWidth="1.600"><path d="M.5 .5L6.500 6.500M6.500 .5L.5 6.500" /></svg>
          </div>
        </div>
        <div className="flex min-h-0 flex-1">
          <div className="min-w-0 flex-1 bg-[#5e5e5e]">
            <Spread />
          </div>
          <div className="flex w-[15px] shrink-0 flex-col items-center bg-[#4b4b4b]">
            <Chev dir="up" className="mt-[4px] h-[10px] w-[10px] text-[#777]" />
            <div className="mt-[312px] h-[215px] w-[13px] rounded-full bg-[#6c6c6c]" />
            <Chev dir="down" className="mt-[38px] h-[10px] w-[10px] text-[#8a8a8a]" />
          </div>
        </div>
        <StatusBar />
      </div>
      <RightPanel />
    </div>
  </div>
);

export default App;
